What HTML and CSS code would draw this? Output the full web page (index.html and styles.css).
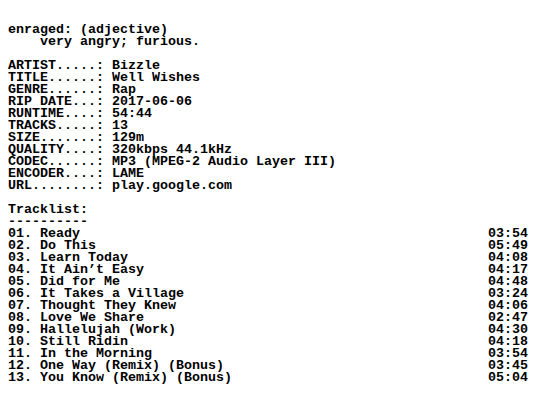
FILE: index.html
```html
<!DOCTYPE html>
<html lang="en">
<head>
<meta charset="utf-8">
<title>Bizzle - Well Wishes</title>
<link rel="stylesheet" href="styles.css">
</head>
<body>
<main class="nfo">
  <section class="definition">
    <p class="line">enraged: (adjective)</p>
    <p class="line indent">very angry; furious.</p>
  </section>

  <dl class="meta">
    <div class="row"><dt>ARTIST.....:</dt><dd>Bizzle</dd></div>
    <div class="row"><dt>TITLE......:</dt><dd>Well Wishes</dd></div>
    <div class="row"><dt>GENRE......:</dt><dd>Rap</dd></div>
    <div class="row"><dt>RIP DATE...:</dt><dd>2017-06-06</dd></div>
    <div class="row"><dt>RUNTIME....:</dt><dd>54:44</dd></div>
    <div class="row"><dt>TRACKS.....:</dt><dd>13</dd></div>
    <div class="row"><dt>SIZE.......:</dt><dd>129m</dd></div>
    <div class="row"><dt>QUALITY....:</dt><dd>320kbps 44.1kHz</dd></div>
    <div class="row"><dt>CODEC......:</dt><dd>MP3 (MPEG-2 Audio Layer III)</dd></div>
    <div class="row"><dt>ENCODER....:</dt><dd>LAME</dd></div>
    <div class="row"><dt>URL........:</dt><dd>play.google.com</dd></div>
  </dl>

  <section class="tracklist">
    <h2 class="heading">Tracklist:</h2>
    <div class="rule">----------</div>
    <ol class="tracks">
      <li class="track"><span class="name">01. Ready</span><span class="time">03:54</span></li>
      <li class="track"><span class="name">02. Do This</span><span class="time">05:49</span></li>
      <li class="track"><span class="name">03. Learn Today</span><span class="time">04:08</span></li>
      <li class="track"><span class="name">04. It Ain’t Easy</span><span class="time">04:17</span></li>
      <li class="track"><span class="name">05. Did for Me</span><span class="time">04:48</span></li>
      <li class="track"><span class="name">06. It Takes a Village</span><span class="time">03:24</span></li>
      <li class="track"><span class="name">07. Thought They Knew</span><span class="time">04:06</span></li>
      <li class="track"><span class="name">08. Love We Share</span><span class="time">02:47</span></li>
      <li class="track"><span class="name">09. Hallelujah (Work)</span><span class="time">04:30</span></li>
      <li class="track"><span class="name">10. Still Ridin</span><span class="time">04:18</span></li>
      <li class="track"><span class="name">11. In the Morning</span><span class="time">03:54</span></li>
      <li class="track"><span class="name">12. One Way (Remix) (Bonus)</span><span class="time">03:45</span></li>
      <li class="track"><span class="name">13. You Know (Remix) (Bonus)</span><span class="time">05:04</span></li>
    </ol>
  </section>
</main>
</body>
</html>
```

FILE: styles.css
```css
html, body {
  margin: 0;
  padding: 0;
  background: #ffffff;
}

body {
  color: #000000;
  font-family: "Liberation Mono", "DejaVu Sans Mono", monospace;
  font-weight: bold;
  font-size: 13.333px;
  line-height: 12px;
}

.nfo {
  padding: 24px 8px 0 8px;
  display: flex;
  flex-direction: column;
  gap: 12px;
}

.line,
.heading,
.rule,
.meta,
.tracks,
dt,
dd {
  margin: 0;
  padding: 0;
  font-size: inherit;
  font-weight: inherit;
  line-height: 12px;
}

.line,
.heading,
.rule,
dt,
dd,
.name,
.time {
  white-space: pre;
}

.indent {
  padding-left: 32px;
}

.meta .row {
  display: flex;
  gap: 8px;
}

.tracks {
  list-style: none;
}

.track {
  display: flex;
  justify-content: space-between;
}
```
